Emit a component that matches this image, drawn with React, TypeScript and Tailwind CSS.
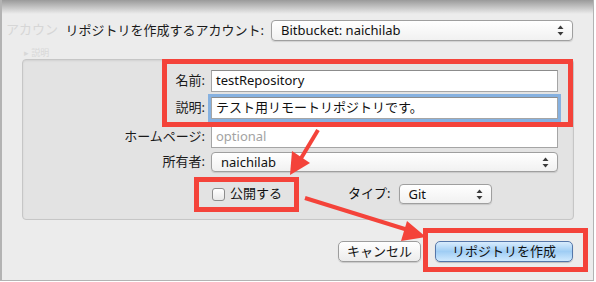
import React from "react";

const font = { fontFamily: '"Noto Sans", "Noto Sans CJK JP", sans-serif' };

function Stepper() {
  return (
    <svg width="7" height="11" viewBox="0 0 7 11" className="shrink-0">
      <path d="M3.5 0.5 L6.5 4 L0.5 4 Z" fill="#3a3a3a" />
      <path d="M3.5 10.5 L6.5 7 L0.5 7 Z" fill="#3a3a3a" />
    </svg>
  );
}

function Popup({ label, className }: { label: string; className: string }) {
  return (
    <div
      className={`flex items-center justify-between rounded-[4px] border border-[#9f9f9f] bg-gradient-to-b from-white to-[#f1f1f1] pl-[9px] pr-[8px] text-[13px] text-[#111] shadow-[0_1px_1px_rgba(0,0,0,0.12)] ${className}`}
    >
      <span className="leading-none">{label}</span>
      <Stepper />
    </div>
  );
}

function Field({ children, focus }: { children: React.ReactNode; focus?: boolean }) {
  return (
    <div
      className={`flex h-[22px] w-[347px] items-center border border-[#a5a5a5] border-t-[#8c8c8c] bg-white pl-[4px] text-[13px] ${
        focus ? "shadow-[0_0_0_3px_#86b1e0]" : ""
      }`}
    >
      {children}
    </div>
  );
}

function Row({ label, children, className }: { label: string; children: React.ReactNode; className?: string }) {
  return (
    <div className={`flex items-center ${className ?? ""}`}>
      <div className="w-[183px] pr-[1px] text-right text-[13px] text-[#1a1a1a]">{label}</div>
      <div className="ml-[5px]">{children}</div>
    </div>
  );
}

export default function App() {
  return (
    <div
      className="relative h-[282px] w-[596px] overflow-hidden bg-white text-[#111]"
      style={font}
    >
      <div className="relative h-[281px] w-[594px] border-b border-l-2 border-r border-[#b3b3b3] bg-[#ececec]">
        {/* ghost text behind the sheet */}
        <div className="absolute left-[4px] top-[20px] text-[13px] text-[#d6d6d6]">アカウン</div>
        <div className="absolute left-[22px] top-[46px] text-[9px] text-[#d8d8d8]">▸ 説明</div>

        {/* account row */}
        <div className="flex items-center pt-[20px]">
          <div className="w-[262px] text-right text-[13px] text-[#1a1a1a]">リポジトリを作成するアカウント:</div>
          <Popup label="Bitbucket: naichilab" className="ml-[7px] h-[21px] w-[302px]" />
        </div>

        {/* group box */}
        <div className="ml-[20px] mt-[18px] h-[161px] w-[552px] rounded-[4px] border border-[#c6c6c6] bg-[#e3e3e3] pt-[10px] shadow-[inset_0_1px_2px_rgba(0,0,0,0.08)]">
          <Row label="名前:">
            <Field>testRepository</Field>
          </Row>
          <Row label="説明:" className="mt-[5px]">
            <Field focus>テスト用リモートリポジトリです。</Field>
          </Row>
          <Row label="ホームページ:" className="mt-[7px]">
            <Field>
              <span className="text-[#a3a3a3]">optional</span>
            </Field>
          </Row>
          <Row label="所有者:" className="mt-[4px]">
            <Popup label="naichilab" className="h-[20px] w-[347px]" />
          </Row>
          <div className="mt-[12px] flex items-center">
            <div className="ml-[189px] h-[13px] w-[13px] rounded-[3px] border border-[#8d8d8d] bg-gradient-to-b from-white to-[#e9e9e9]" />
            <span className="ml-[5px] text-[13px]">公開する</span>
            <span className="ml-[66px] text-[13px]">タイプ:</span>
            <Popup label="Git" className="ml-[8px] h-[20px] w-[93px]" />
          </div>
        </div>

        {/* buttons */}
        <div className="mt-[21px] flex justify-end pr-[20px]">
          <button className="h-[21px] w-[83px] rounded-[5px] border border-[#9d9d9d] bg-gradient-to-b from-white to-[#ececec] text-[13px] text-[#111] shadow-[0_1px_1px_rgba(0,0,0,0.15)]">
            キャンセル
          </button>
          <button className="ml-[14px] h-[21px] w-[138px] rounded-[5px] border border-[#5577aa] bg-gradient-to-b from-[#d8ecfd] via-[#9fcdf4] to-[#cfe9fe] text-[13px] text-[#111] shadow-[0_1px_1px_rgba(0,0,0,0.2)]">
            リポジトリを作成
          </button>
        </div>

        {/* top shadow of the sheet */}
        <div className="pointer-events-none absolute left-0 right-0 top-0 h-[14px] bg-gradient-to-b from-[#9a9a9a] to-transparent" />

        {/* annotations */}
        <div className="pointer-events-none absolute left-[160px] top-[59px] h-[68px] w-[411px] border-[5px] border-[#f4433a]" />
        <div className="pointer-events-none absolute left-[192px] top-[177px] h-[35px] w-[105px] border-[5px] border-[#f4433a]" />
        <div className="pointer-events-none absolute left-[421px] top-[228px] h-[44px] w-[165px] border-[5px] border-[#f4433a]" />
        <svg className="pointer-events-none absolute left-0 top-0" width="596" height="282">
          <line x1="316" y1="130" x2="298" y2="160" stroke="#f4433a" strokeWidth="4" />
          <path d="M288 175 L290 151 L308 163 Z" fill="#f4433a" />
          <line x1="303" y1="198" x2="406" y2="230" stroke="#f4433a" strokeWidth="4" />
          <path d="M424 237 L405 221 L399 241 Z" fill="#f4433a" />
        </svg>
      </div>
    </div>
  );
}
